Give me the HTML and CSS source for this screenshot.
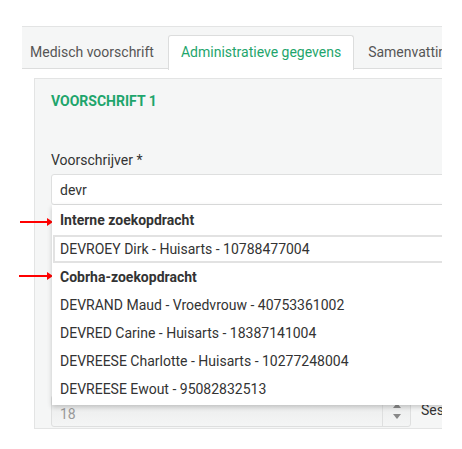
FILE: index.html
```html
<!DOCTYPE html>
<html lang="nl">
<head>
    <meta charset="UTF-8">
    <meta name="viewport" content="width=device-width, initial-scale=1.0">
    <title>Voorschrift</title>
    <link rel="stylesheet" href="styles.css">
</head>
<body>
    <div class="frame">
        <div class="tabs">
            <div class="tab">Medisch voorschrift</div>
            <div class="tab active">Administratieve gegevens</div>
            <div class="tab">Samenvatting</div>
        </div>

        <div class="panel">
            <h3 class="panel-title">VOORSCHRIFT 1</h3>

            <div class="field">
                <label for="prescriber">Voorschrijver *</label>
                <input type="text" id="prescriber" class="text-input" value="devr">

                <ul class="suggestions">
                    <li class="group">Interne zoekopdracht</li>
                    <li class="item selected">DEVROEY Dirk - Huisarts - 10788477004</li>
                    <li class="group">Cobrha-zoekopdracht</li>
                    <li class="item">DEVRAND Maud - Vroedvrouw - 40753361002</li>
                    <li class="item">DEVRED Carine - Huisarts - 18387141004</li>
                    <li class="item">DEVREESE Charlotte - Huisarts - 10277248004</li>
                    <li class="item">DEVREESE Ewout - 95082832513</li>
                </ul>
            </div>

            <div class="field-row">
                <div class="number-input">
                    <span class="number-value">18</span>
                    <span class="spinner">
                        <span class="spin-up"></span>
                        <span class="spin-down"></span>
                    </span>
                </div>
                <span class="row-label">Sessies</span>
            </div>
        </div>
    </div>

    <!-- red pointers next to the two result groups -->
    <span class="pointer pointer-internal"></span>
    <span class="pointer pointer-cobrha"></span>
</body>
</html>
```

FILE: styles.css
```css
body {
    margin: 0;
    background: #fff;
    font-family: Roboto, "Liberation Sans", Arial, sans-serif;
    color: #333;
}
.frame {
    margin: 26px 0 0 22px;
    width: 420px;
    overflow: hidden;
}
.tabs {
    display: flex;
    height: 33px;
    padding-top: 8px;
    background: #f5f6f6;
    border-top: 1px solid #e3e4e4;
    border-bottom: 1px solid #dcdddd;
    white-space: nowrap;
}
.tab {
    padding: 0 13px;
    font-size: 14px;
    line-height: 33px;
    color: #555;
    border: 1px solid transparent;
    border-bottom: none;
}
.tab:first-child {
    padding-left: 7px;
}
.tab.active {
    background: #fff;
    color: #1ea56c;
    border-color: #dcdddd;
    border-radius: 3px 3px 0 0;
    margin-bottom: -1px;
    height: 34px;
    padding: 0 12px;
}
.panel {
    margin: 9px 0 0 12px;
    padding: 14px 0 1px 16px;
    background: #f5f6f6;
    border: 1px solid #e3e4e4;
    border-right: none;
}
.panel-title {
    margin: 0;
    font-size: 14px;
    line-height: 16px;
    font-weight: bold;
    color: #1ea56c;
}
.field {
    position: relative;
    margin-top: 43px;
}
.field label {
    display: block;
    font-size: 14px;
    line-height: 16px;
    margin-bottom: 6px;
}
.text-input {
    display: block;
    width: 420px;
    height: 31px;
    box-sizing: border-box;
    padding: 0 8px;
    border: 1px solid #dedfdf;
    border-radius: 3px;
    background: #fff;
    font-family: inherit;
    font-size: 14px;
    color: #333;
}
.suggestions {
    position: absolute;
    top: 53px;
    left: 1px;
    width: 420px;
    margin: 0;
    padding: 0 0 2px;
    list-style: none;
    background: #fff;
    box-shadow: 0 2px 5px rgba(0, 0, 0, 0.2);
    z-index: 2;
}
.suggestions li {
    padding: 0 8px;
    font-size: 14px;
    white-space: nowrap;
}
.suggestions .group {
    height: 28px;
    line-height: 28px;
    font-weight: bold;
}
.suggestions .group:first-child {
    height: 30px;
    line-height: 30px;
}
.suggestions .item {
    height: 28px;
    line-height: 28px;
    color: #333;
}
.suggestions .item.selected {
    margin-left: 1px;
    padding-left: 5px;
    height: 24px;
    line-height: 24px;
    border: 2px solid #e2e2e2;
}
.field-row {
    display: flex;
    align-items: center;
    gap: 10px;
    margin-top: 190px;
    white-space: nowrap;
}
.number-input {
    display: flex;
    width: 360px;
    height: 32px;
    box-sizing: border-box;
    border: 1px solid #dedfdf;
    border-radius: 3px;
    background: linear-gradient(#e9eaea, #f4f5f5);
    flex-shrink: 0;
}
.number-value {
    flex: 1;
    padding: 0 8px;
    font-size: 14px;
    line-height: 36px;
    color: #999;
}
.spinner {
    display: flex;
    flex-direction: column;
    align-items: center;
    justify-content: space-around;
    width: 27px;
    border-left: 1px solid #dedfdf;
    padding: 4px 0;
}
.spin-up {
    width: 0;
    height: 0;
    border-left: 4px solid transparent;
    border-right: 4px solid transparent;
    border-bottom: 5px solid #888;
}
.spin-down {
    width: 0;
    height: 0;
    border-left: 4px solid transparent;
    border-right: 4px solid transparent;
    border-top: 5px solid #888;
}
.row-label {
    font-size: 14px;
    color: #333;
    margin-top: -2px;
}
.pointer {
    position: absolute;
    left: 20px;
    width: 28px;
    height: 2px;
    background: #f00;
}
.pointer::after {
    content: "";
    position: absolute;
    right: -5px;
    top: -3px;
    border-top: 4px solid transparent;
    border-bottom: 4px solid transparent;
    border-left: 6px solid #f00;
}
.pointer-internal {
    top: 221px;
}
.pointer-cobrha {
    top: 275px;
    left: 19px;
    width: 29px;
}
```
